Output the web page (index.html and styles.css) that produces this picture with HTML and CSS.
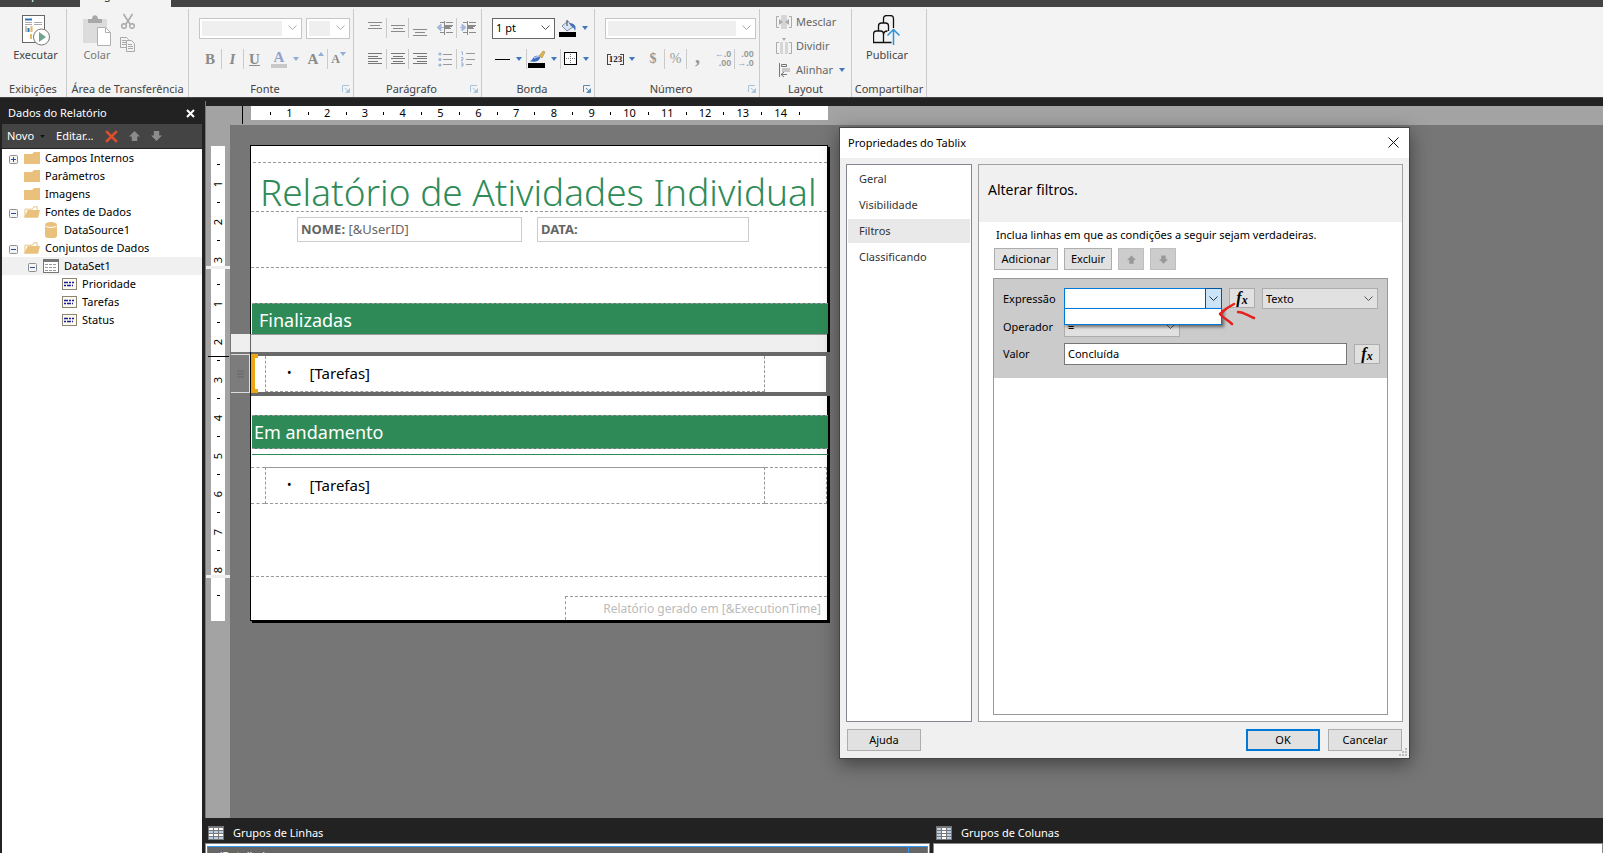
FILE: index.html
```html
<!DOCTYPE html>
<html lang="pt-BR">
<head>
<meta charset="utf-8">
<title>Report Builder</title>
<link rel="stylesheet" href="styles.css">
</head>
<body>
<svg class="defs" aria-hidden="true">
  <symbol id="caret" viewBox="0 0 6 4"><path d="M0 0h6L3 4z" fill="#3f78bd"/></symbol>
  <symbol id="launcher" viewBox="0 0 8 8"><path d="M.5 7V.5H7M3 3l4 4M7.500 3.500v4h-4" fill="none" stroke="currentColor"/><path d="M7 4v3H4z" fill="currentColor"/></symbol>
  <symbol id="folder" viewBox="0 0 16 14"><path d="M0 3h8l2-2h6v12H0z" fill="#e9c07c"/></symbol>
  <symbol id="folder-open" viewBox="0 0 17 14"><path d="M1 12V4h8l1.500-2.500H14V5" fill="#fff" stroke="#e9c07c"/><path d="M0 13L4 5h13l-2 8z" fill="#e9c07c"/></symbol>
  <symbol id="minus" viewBox="0 0 9 9"><rect x=".5" y=".5" width="8" height="8" rx="1" fill="#f4f4f4" stroke="#8e8f8f"/><path d="M2 4.500h5" stroke="#2b4b9b"/></symbol>
  <symbol id="plus" viewBox="0 0 9 9"><rect x=".5" y=".5" width="8" height="8" rx="1" fill="#f4f4f4" stroke="#8e8f8f"/><path d="M2 4.500h5M4.500 2v5" stroke="#2b4b9b"/></symbol>
  <symbol id="field" viewBox="0 0 15 12"><rect x=".5" y=".5" width="14" height="11" fill="#fdfbf0" stroke="#8a8470"/><path d="M2 4.500h4M7 4.500h2M10 4.500h2M2 7.500h2M5 7.500h4M10 7.500h1" stroke="#1b1b9c" stroke-width="1.500"/></symbol>
  <symbol id="arrow-up" viewBox="0 0 12 11"><path d="M6 0l6 6H9v5H3V6H0z" fill="currentColor"/></symbol>
  <symbol id="arrow-down" viewBox="0 0 12 11"><path d="M6 11L0 5h3V0h6v5h3z" fill="currentColor"/></symbol>
</svg>

<div class="app">
  <nav class="tabs"><a class="tab" href="#">Arquivo</a><a class="tab tab-on" href="#">Página Inicial</a></nav>

  <header class="ribbon">
    <section class="group g-run">
      <div class="body center"><button class="big"><svg width="28" height="32" viewBox="0 0 28 32"><rect x=".5" y=".5" width="22" height="27" fill="#fff" stroke="#666"/><path d="M3 4.500h7" stroke="#2e75b6" stroke-width="2"/><path d="M3 7.500h7M3 9.500h7M12 7.500h8M12 9.500h8" stroke="#aaa"/><path d="M4 11v6" stroke="#888"/><path d="M6.500 13v4" stroke="#2e75b6" stroke-width="2"/><path d="M9.500 11v6M9 19v5" stroke="#e8b765" stroke-width="2"/><circle cx="19.500" cy="22" r="8" fill="#fff" stroke="#777"/><path d="M17 17v10l7-5z" fill="#6fa58d"/></svg><span>Executar</span></button></div>
      <footer><span>Exibições</span></footer>
    </section>
    <section class="group g-clip">
      <div class="body clip"><button class="big dim"><svg width="28" height="32" viewBox="0 0 28 32"><path d="M0 4h24v24H0z" fill="#dcdcdc"/><path d="M5 8V4h4c0-5 6-5 6 0h4v4z" fill="#a8a8a8"/><path d="M14.500 12.500h8l5 5v13h-13z" fill="#fff" stroke="#b0b0b0"/><path d="M22.500 12.500v5h5" fill="none" stroke="#b0b0b0"/></svg><span>Colar</span></button>
        <div class="stack"><button aria-label="Recortar"><svg width="16" height="16" viewBox="0 0 16 16" fill="none" stroke="#a9a9a9" stroke-width="1.500"><path d="M3.500 1l6.500 10M12.500 1L6 11"/><circle cx="4" cy="13" r="2.300"/><circle cx="12" cy="13" r="2.300"/></svg></button><button aria-label="Copiar"><svg width="16" height="15" viewBox="0 0 16 15" fill="#f3f3f3" stroke="#a9a9a9"><path d="M.5.5h6l2 2v8h-8z"/><path d="M6.500 3.500h5l3 3v8h-8z"/><path d="M2 3.500h4M2 5.500h4M2 7.500h4M8 7.500h4M8 9.500h5M8 11.500h5"/></svg></button></div></div>
      <footer><span>Área de Transferência</span></footer>
    </section>
    <section class="group g-font">
      <div class="body">
        <div class="row gap"><select class="combo empty grow" disabled aria-label="Fonte"></select><select class="combo empty size" disabled aria-label="Tamanho"></select></div>
        <div class="row letters"><button class="b"><b>B</b></button><button class="b sep"><i>I</i></button><button class="b sep"><u>U</u></button><button class="b color"><span>A</span><svg width="6" height="4" viewBox="0 0 6 4"><path d="M0 0h6L3 4z" fill="#8faed6"/></svg></button><button class="b up">A<svg width="6" height="4" viewBox="0 0 6 4"><path d="M0 4h6L3 0z" fill="#8faed6"/></svg></button><button class="b sep down">A<svg width="6" height="4" viewBox="0 0 6 4"><path d="M0 0h6L3 4z" fill="#8faed6"/></svg></button></div>
      </div>
      <footer><span>Fonte</span><svg class="launch" width="8" height="8"><use href="#launcher"/></svg></footer>
    </section>
    <section class="group g-par">
      <div class="body">
        <div class="row lines">
          <button class="b"><svg width="16" height="16" viewBox="0 0 16 16"><path d="M1 2.500h14M3 5.500h10M1 8.500h14M4 11" stroke="#8a8a8a"/></svg></button>
          <button class="b sep"><svg width="16" height="16" viewBox="0 0 16 16"><path d="M1 5.500h14M3 8.500h10M1 11.500h14" stroke="#8a8a8a"/></svg></button>
          <button class="b sep"><svg width="16" height="16" viewBox="0 0 16 16"><path d="M1 9.500h14M3 12.500h10M1 15.500h14" stroke="#8a8a8a"/></svg></button>
          <button class="b gapl"><svg width="16" height="16" viewBox="0 0 16 16"><path d="M3 2.500h4M9 2.500h7M8 5.500h8M8 8.500h6M3 12.500h4M9 12.500h7M7.500 1v14" stroke="#8a8a8a"/><path d="M8 6h7M8 8h5" stroke="#8a8a8a" stroke-width="2"/><path d="M0 7.500L4 4v7zM3 7.500h4" fill="#a5b8dc" stroke="#a5b8dc"/></svg></button>
          <button class="b sep"><svg width="16" height="16" viewBox="0 0 16 16"><path d="M3 2.500h4M9 2.500h7M8 5.500h8M8 8.500h6M3 12.500h4M9 12.500h7M7.500 1v14" stroke="#8a8a8a"/><path d="M8 6h7M8 8h5" stroke="#8a8a8a" stroke-width="2"/><path d="M6 7.500L2 4v7zM0 7.500h3" fill="#a5b8dc" stroke="#a5b8dc"/></svg></button>
        </div>
        <div class="row lines">
          <button class="b"><svg width="16" height="16" viewBox="0 0 16 16"><path d="M1 2.500h14M1 5.500h10M1 7.500h14M1 10.500h10M1 12.500h14" stroke="#777"/></svg></button>
          <button class="b sep"><svg width="16" height="16" viewBox="0 0 16 16"><path d="M1 2.500h14M3 5.500h10M1 7.500h14M3 10.500h10M1 12.500h14" stroke="#777"/></svg></button>
          <button class="b sep"><svg width="16" height="16" viewBox="0 0 16 16"><path d="M1 2.500h14M5 5.500h10M1 7.500h14M5 10.500h10M1 12.500h14" stroke="#777"/></svg></button>
          <button class="b gapl"><svg width="16" height="16" viewBox="0 0 16 16"><path d="M6 3.500h9M6 8.500h9M6 13.500h9" stroke="#999"/><g fill="#9fb3da"><circle cx="3" cy="3" r="1.600"/><circle cx="3" cy="8.500" r="1.600"/><circle cx="3" cy="14" r="1.600"/></g></svg></button>
          <button class="b sep"><svg width="16" height="16" viewBox="0 0 16 16"><path d="M6 2.500h9M6 8.500h9M6 13.500h6" stroke="#999"/><path d="M1 1h1.500v3M1 6.500h2v2H1.500v1.500H3M1 12h2v3H1M3 13.500H1.500" fill="none" stroke="#9fb3da"/></svg></button>
        </div>
      </div>
      <footer><span>Parágrafo</span><svg class="launch" width="8" height="8"><use href="#launcher"/></svg></footer>
    </section>
    <section class="group g-border">
      <div class="body">
        <div class="row gap"><select class="combo pt" aria-label="Espessura"><option>1 pt</option></select><button class="b wide"><svg width="18" height="18" viewBox="0 0 18 18"><path d="M3 7l6-5 5 6-6 4z" fill="#dbe4f1" stroke="#7b8da8"/><path d="M8 1v6" stroke="#444"/><path d="M10 4c5 0 8 3 6 8-1-3-2-4-4-5z" fill="#3f6fb8"/><path d="M0 13h17v5H0z"/></svg><svg width="6" height="4"><use href="#caret"/></svg></button></div>
        <div class="row">
          <button class="b w34"><svg width="16" height="16" viewBox="0 0 16 16"><path d="M0 8.500h15" stroke="#000"/></svg><svg width="6" height="4"><use href="#caret"/></svg></button>
          <button class="b w34 sep"><svg width="18" height="18" viewBox="0 0 18 18"><path d="M11 6l4-5 2 1-3 6z" fill="#e3b64a" stroke="#8a7a45" stroke-width=".5"/><path d="M1 11c3 0 3-2 5-4 2-2 4-1 6 0 0 4-5 6-11 4z" fill="#3d6cc0"/><path d="M6 8l5-2" stroke="#a9c0ea" stroke-width="1.500"/><path d="M0 13h17v5H0z"/></svg><svg width="6" height="4"><use href="#caret"/></svg></button>
          <button class="b w34 sep"><svg width="14" height="14" viewBox="0 0 14 14"><rect x=".5" y=".5" width="12" height="12" fill="#fff" stroke="#000"/><path d="M6.500 2v10M2 6.500h10" stroke="#777" stroke-dasharray="1 1"/></svg><svg width="6" height="4"><use href="#caret"/></svg></button>
        </div>
      </div>
      <footer><span>Borda</span><svg class="launch on" width="8" height="8"><use href="#launcher"/></svg></footer>
    </section>
    <section class="group g-num">
      <div class="body">
        <div class="row gap"><select class="combo empty grow" disabled aria-label="Formato de número"></select></div>
        <div class="row nums"><button class="b w34 n123"><span>123</span><svg width="6" height="4"><use href="#caret"/></svg></button><button class="b gapn">$</button><button class="b sep pct">%</button><button class="b sep comma">,</button><button class="b dec gapl"><span><em>←</em>.0<br>.00</span></button><button class="b dec sep"><span>.00<br><em>→</em>.0</span></button></div>
      </div>
      <footer><span>Número</span><svg class="launch" width="8" height="8"><use href="#launcher"/></svg></footer>
    </section>
    <section class="group g-lay">
      <div class="body layout">
        <button><svg width="16" height="16" viewBox="0 0 16 16"><path d="M5 1h6v14H5z" fill="#d6d6d6"/><path d="M3 2.500H.5v11H3M13 2.500h2.500v11H13" fill="none" stroke="#aaa"/><path d="M3 5l4 3-4 3zM13 5L9 8l4 3z" fill="#aaa"/></svg>Mesclar</button>
        <button><svg width="16" height="16" viewBox="0 0 16 16"><path d="M6 0h4L8 3z" fill="#aaa"/><path d="M4 4h3v12H4zM9 4h3v12H9z" fill="#d6d6d6"/><path d="M3 4.500H.5v11H3M13 4.500h2.500v11H13" fill="none" stroke="#aaa"/></svg>Dividir</button>
        <button><svg width="16" height="16" viewBox="0 0 16 16"><path d="M3.500 1v14" stroke="#777"/><path d="M5.500 2.500h5v2h-5z" fill="none" stroke="#777"/><path d="M6 6h8v4H6z" fill="#c9c9c9"/><path d="M5 12.500h6M8 10l-3 2.500L8 15" fill="none" stroke="#777"/></svg>Alinhar<svg class="al" width="6" height="4"><use href="#caret"/></svg></button>
      </div>
      <footer><span>Layout</span></footer>
    </section>
    <section class="group g-share">
      <div class="body center"><button class="big"><svg width="28" height="32" viewBox="0 0 28 32" fill="none" stroke="#111" stroke-width="1.300"><path d="M10.500 8V4c0-2 1-3.500 3-3.500h4c2 0 3 1 3 3V13"/><path d="M5.500 16v-5c0-2 1-3 3-3h4c2 0 3 1 3 3v5"/><path d="M.5 27.500V19c0-2 1-3 3-3h4c2 0 3 1 3 3v8.500zM10.500 27.500h8M10.500 20c0-2 1-4 4-4"/><path d="M20.500 30V15M14.500 20.500l6-6 6 6" stroke="#2a93dc" stroke-width="1.500"/></svg><span>Publicar</span></button></div>
      <footer><span>Compartilhar</span></footer>
    </section>
  </header>

  <div class="main">
    <aside class="data">
      <div class="data-title"><span>Dados do Relatório</span><button aria-label="Fechar"><svg width="9" height="9" viewBox="0 0 9 9"><path d="M1 1l7 7M8 1L1 8" stroke="#fff" stroke-width="2"/></svg></button></div>
      <div class="data-bar"><button>Novo<svg width="5" height="3" viewBox="0 0 6 4"><path d="M0 0h6L3 4z" fill="#111"/></svg></button><button>Editar...</button><button aria-label="Excluir"><svg width="13" height="13" viewBox="0 0 12 12"><path d="M1 1l10 10M11 1L1 11" stroke="#df4f2b" stroke-width="2.400"/></svg></button><button class="ar" aria-label="Acima"><svg width="11" height="10" viewBox="0 0 12 11"><use href="#arrow-up"/></svg></button><button class="ar" aria-label="Abaixo"><svg width="11" height="10" viewBox="0 0 12 11"><use href="#arrow-down"/></svg></button></div>
      <ul class="tree">
        <li><svg class="tg" width="9" height="9"><use href="#plus"/></svg><svg class="ic" width="16" height="14"><use href="#folder"/></svg>Campos Internos</li>
        <li><i class="tg"></i><svg class="ic" width="16" height="14"><use href="#folder"/></svg>Parâmetros</li>
        <li><i class="tg"></i><svg class="ic" width="16" height="14"><use href="#folder"/></svg>Imagens</li>
        <li><svg class="tg" width="9" height="9"><use href="#minus"/></svg><svg class="ic" width="16" height="14"><use href="#folder-open"/></svg>Fontes de Dados</li>
        <li class="l2"><i class="tg"></i><svg class="ic" width="16" height="16" viewBox="0 0 16 16"><path d="M2 3c0-4 12-4 12 0v11c0 3-12 3-12 0z" fill="#e9c07c"/><path d="M2 3.500c1 2.500 11 2.500 12 0" fill="none" stroke="#fff"/></svg>DataSource1</li>
        <li><svg class="tg" width="9" height="9"><use href="#minus"/></svg><svg class="ic" width="16" height="14"><use href="#folder-open"/></svg>Conjuntos de Dados</li>
        <li class="l2 on"><svg class="tg" width="9" height="9"><use href="#minus"/></svg><svg class="ic" width="16" height="14" viewBox="0 0 16 14"><rect x=".5" y=".5" width="15" height="13" fill="#fff" stroke="#777"/><path d="M0 1.500h16" stroke="#777" stroke-width="3"/><path d="M2 5.500h12M2 8.500h12M2 11.500h12" stroke="#999" stroke-dasharray="3 1"/></svg>DataSet1</li>
        <li class="l3"><i class="tg"></i><svg class="ic" width="15" height="12"><use href="#field"/></svg>Prioridade</li>
        <li class="l3"><i class="tg"></i><svg class="ic" width="15" height="12"><use href="#field"/></svg>Tarefas</li>
        <li class="l3"><i class="tg"></i><svg class="ic" width="15" height="12"><use href="#field"/></svg>Status</li>
      </ul>
    </aside>

    <div class="work">
      <div class="design">
        <div class="hrule"><div class="hscale"><i></i><b>1</b><i></i><b>2</b><i></i><b>3</b><i></i><b>4</b><i></i><b>5</b><i></i><b>6</b><i></i><b>7</b><i></i><b>8</b><i></i><b>9</b><i></i><b>10</b><i></i><b>11</b><i></i><b>12</b><i></i><b>13</b><i></i><b>14</b><i></i></div></div>
        <div class="lower">
          <div class="vrule">
            <div class="vseg s1"><div><i></i><b>1</b><i></i><b>2</b><i></i><b>3</b></div></div>
            <div class="vseg s2"><div><i></i><b>1</b><i></i><b>2</b><i></i><b>3</b><i></i><b>4</b><i></i><b>5</b><i></i><b>6</b><i></i><b>7</b><i></i><b>8</b></div><span class="mark"></span></div>
            <div class="vseg s3"><div><i></i></div></div>
          </div>
          <div class="canvas">
            <article class="page">
              <h1>Relatório de Atividades Individual</h1>
              <div class="meta"><p class="nome"><b>NOME:</b> [&amp;UserID]</p><p class="date"><b>DATA:</b></p></div>
              <div class="rbody">
                <h2 class="bar first">Finalizadas</h2>
                <div class="tablix-sel">
                  <span class="corner"></span><span class="handle"><svg width="7" height="8" viewBox="0 0 7 8"><path d="M0 1h7M0 4h7M0 7h7" stroke="#666"/></svg></span>
                  <div class="colgrip"></div>
                  <div class="selrow"><span class="bracket"></span><div class="cell"><span class="dot">•</span>[Tarefas]</div></div>
                </div>
                <h2 class="bar second">Em andamento</h2>
                <hr>
                <div class="tablix"><div class="pad"></div><div class="cell"><span class="dot">•</span>[Tarefas]</div><div class="rest"></div></div>
              </div>
              <div class="pfoot"><p>Relatório gerado em [&amp;ExecutionTime]</p></div>
            </article>
          </div>
        </div>
      </div>
      <div class="groups">
        <section class="rows"><h3><svg width="16" height="14" viewBox="0 0 16 14"><path d="M0 0h16v14H0z" fill="#777"/><path d="M1 2h4v2H1zM6 2h4v2H6zM11 2h4v2h-4zM1 8h4v2H1zM6 8h4v2H6zM11 8h4v2h-4z" fill="#fff"/><path d="M1 5h4v2H1zM6 5h4v2H6zM11 5h4v2h-4zM1 11h4v2H1zM6 11h4v2H6zM11 11h4v2h-4z" fill="#b9d0e6"/></svg>Grupos de Linhas</h3><div class="gbox"><div class="gitem"><span>(Detalhe)</span></div></div></section>
        <section class="cols"><h3><svg width="16" height="14" viewBox="0 0 16 14"><path d="M0 0h16v14H0z" fill="#777"/><path d="M1 2h4v2H1zM11 2h4v2h-4zM1 5h4v2H1zM11 5h4v2h-4zM1 8h4v2H1zM11 8h4v2h-4zM1 11h4v2H1zM11 11h4v2h-4z" fill="#b9d0e6"/><path d="M6 2h4v2H6zM6 5h4v2H6zM6 8h4v2H6zM6 11h4v2H6z" fill="#fff"/></svg>Grupos de Colunas</h3><div class="gbox"></div></section>
      </div>
    </div>
  </div>
</div>

<div class="dialog" role="dialog" aria-label="Propriedades do Tablix">
  <div class="dlg-title"><span>Propriedades do Tablix</span><button aria-label="Fechar"><svg width="11" height="11" viewBox="0 0 11 11"><path d="M.5.5l10 10M10.500.5l-10 10" stroke="#111"/></svg></button></div>
  <div class="dlg-body">
    <ul class="cats"><li>Geral</li><li>Visibilidade</li><li class="on">Filtros</li><li>Classificando</li></ul>
    <div class="pane">
      <h2>Alterar filtros.</h2>
      <p>Inclua linhas em que as condições a seguir sejam verdadeiras.</p>
      <div class="tools"><button class="btn add">Adicionar</button><button class="btn del">Excluir</button><button class="btn ico" disabled aria-label="Acima"><svg width="9" height="9"><use href="#arrow-up"/></svg></button><button class="btn ico" disabled aria-label="Abaixo"><svg width="9" height="9"><use href="#arrow-down"/></svg></button></div>
      <div class="filters">
        <form class="filter">
          <label for="expr">Expressão</label>
          <div class="exprrow"><div class="open"><input id="expr" type="text"><button type="button" aria-label="Abrir"><svg width="9" height="6" viewBox="0 0 9 6"><path d="M.5.5l4 4 4-4" fill="none" stroke="#333"/></svg></button><div class="drop"></div></div><button type="button" class="btn fx">f<sub>x</sub></button><select class="combo flat tx" aria-label="Tipo"><option>Texto</option></select>
          <svg class="ink" width="38" height="24" viewBox="0 0 38 24" fill="none" stroke="#e5201d" stroke-width="2.500" stroke-linecap="round" stroke-linejoin="round"><path d="M16 2C10 5 5 9 2 12c3 4 8 6 12 10M20 10c6 0 10 4 16 6"/></svg></div>
          <label for="op">Operador</label>
          <div><select id="op" class="combo flat op"><option>=</option></select></div>
          <label for="val">Valor</label>
          <div class="valrow"><input id="val" type="text" value="Concluída"><button type="button" class="btn fx">f<sub>x</sub></button></div>
        </form>
      </div>
    </div>
  </div>
  <div class="dlg-foot"><button class="btn">Ajuda</button><span class="space"></span><button class="btn ok">OK</button><button class="btn">Cancelar</button>
  <svg class="grip" width="9" height="9" viewBox="0 0 9 9" fill="#bbb"><path d="M6 0h2v2H6zM6 3h2v2H6zM3 3h2v2H3zM6 6h2v2H6zM3 6h2v2H3zM0 6h2v2H0z"/></svg></div>
</div>
</body>
</html>
```
FILE: styles.css
```css
* { box-sizing: border-box; }
body { margin: 0; font: 11px/16px "Noto Sans", "Open Sans", sans-serif; color: #000; overflow: hidden; }
button, input, select { font: inherit; color: inherit; }
button { border: 0; padding: 0; background: none; }
h1, h2, h3, p, ul { margin: 0; padding: 0; font-weight: normal; list-style: none; }
svg { display: block; flex: none; }
.defs { position: absolute; width: 0; height: 0; }
.app { height: 100vh; display: flex; flex-direction: column; background: #222; }

/* tab strip and ribbon */
.tabs { height: 7px; background: #444; display: flex; align-items: flex-end; overflow: hidden; flex: none; }
.tab { width: 80px; text-align: center; line-height: 16px; padding-bottom: 4px; color: #fff; text-decoration: none; flex: none; padding-right: 8px; }
.tab-on { width: 91px; padding-right: 0; background: #f3f3f3; color: #333; }
.ribbon { background: #f3f3f3; height: 91px; border-bottom: 1px solid #444; display: flex; flex: none; padding: 2px 0 0; color: #444; }
.group { border-right: 1px solid #cacaca; display: flex; flex-direction: column; flex: none; }
.g-run { width: 67px; } .g-clip { width: 122px; } .g-font { width: 165px; } .g-par { width: 128px; }
.g-border { width: 113px; } .g-num { width: 165px; } .g-lay { width: 92px; } .g-share { width: 75px; }
.group .body { flex: 1; padding: 8px 3px 0 10px; display: flex; flex-direction: column; gap: 9px; }
.group footer { height: 16px; text-align: center; position: relative; white-space: nowrap; }
.g-font footer, .g-par footer, .g-border footer, .g-num footer { padding-right: 12px; }
.launch { position: absolute; right: 3px; bottom: 4px; color: #a6c3da; }
.launch.on { color: #5a8ab4; }
.group .center { align-items: center; padding: 6px 0 0; }
.g-run .center { padding-left: 5px; }
.g-share .center { padding-right: 4px; }
.big { display: flex; flex-direction: column; align-items: center; }
.dim { color: #777; }
.group .clip { flex-direction: row; padding: 6px 0 0 16px; gap: 9px; }
.clip .big { align-self: flex-start; }
.stack { display: flex; flex-direction: column; gap: 8px; margin-top: -2px; }
.row { display: flex; align-items: center; height: 22px; }
.gap { gap: 4px; }
.b { width: 22px; height: 20px; display: flex; align-items: center; justify-content: center; flex: none; }
.sep { border-left: 1px solid #cacaca; }
.combo { appearance: none; height: 21px; border: 1px solid #c6c6c6; border-radius: 0; padding: 0 18px 0 3px; background: url("data:image/svg+xml,%3Csvg xmlns='http://www.w3.org/2000/svg' width='9' height='6'%3E%3Cpath d='M.5.5l4 4 4-4' fill='none' stroke='%23555'/%3E%3C/svg%3E") no-repeat right 4px center #fff; }
.empty { opacity: 1; background-image: url("data:image/svg+xml,%3Csvg xmlns='http://www.w3.org/2000/svg' width='9' height='6'%3E%3Cpath d='M.5.5l4 4 4-4' fill='none' stroke='%23aaa'/%3E%3C/svg%3E"), linear-gradient(#efefef, #efefef); background-size: 9px 6px, calc(100% - 21px) 15px; background-position: right 4px center, 2px center; background-repeat: no-repeat; }
.grow { flex: 1; min-width: 0; }
.size { width: 44px; }
.pt { width: 64px; border-color: #666; color: #000; }
.wide { width: 32px; gap: 5px; padding-right: 3px; }
.w34 { width: 34px; gap: 5px; padding-right: 2px; }
.letters { font: bold 15px "Liberation Serif", serif; color: #8a8a8a; }
.letters .color { width: 40px; gap: 6px; color: #8fa3cc; }
.color span { border-bottom: 4px solid #c9c9c9; padding: 0 3px; line-height: 13px; }
.up svg, .down svg { align-self: flex-start; margin-top: 3px; }
.down { font-size: 12px; }
.gapl { margin-left: 4px; }
.nums { font: bold 14px "Liberation Serif", serif; color: #999; }
.pct { font-weight: normal; }
.comma { font-size: 20px; line-height: 10px; padding-bottom: 7px; }
.n123 span { font-size: 9px; line-height: 11px; color: #222; padding: 0 1px; background: linear-gradient(#444, #444) 0 0 / 3px 1px, linear-gradient(#444, #444) 100% 0 / 3px 1px, linear-gradient(#444, #444) 0 100% / 3px 1px, linear-gradient(#444, #444) 100% 100% / 3px 1px; background-repeat: no-repeat; border: solid #444; border-width: 0 1px; }
.gapn { margin-left: 3px; }
.dec span { font: bold 9px/9px "Liberation Sans", sans-serif; text-align: right; }
.dec em { font-style: normal; color: #8aa8dd; }
.group .layout { gap: 8px; padding: 5px 0 0 16px; }
.layout button { display: flex; align-items: center; gap: 4px; height: 16px; color: #666; }
.al { margin-left: 2px; }

/* report data panel */
.main { flex: 1; display: flex; min-height: 0; }
.data { width: 205px; padding: 0 3px 0 2px; display: flex; flex-direction: column; flex: none; }
.data-title { height: 26px; color: #fff; display: flex; align-items: center; justify-content: space-between; padding: 4px 7px 0 6px; }
.data-bar { height: 25px; background: #444; color: #fff; display: flex; align-items: center; padding-left: 5px; gap: 11px; border-bottom: 1px solid #222; }
.data-bar button { display: flex; align-items: center; gap: 6px; }
.data-bar .ar { color: #8c8c8c; }
.tree { background: #fff; flex: 1; }
.tree li { height: 18px; display: flex; align-items: center; padding-left: 7px; }
.tree .tg { width: 9px; margin: 2px 6px 0 0; flex: none; }
.tree .ic { margin-right: 5px; }
.tree .l2 { padding-left: 26px; }
.tree .l3 { padding-left: 45px; }
.tree .on { background: #f0f0f0; }

/* design surface */
.work { flex: 1; display: flex; flex-direction: column; min-width: 0; padding-top: 3px; }
.design { flex: 1; display: flex; flex-direction: column; border-left: 1px solid #777; min-height: 0; background: #a3a3a3; }
.hrule { height: 24px; border-top: 5px solid #222; padding-left: 45px; flex: none; background: linear-gradient(#000, #000) no-repeat 36px 0 / 1px 18px; }
.hscale { width: 577px; height: 14px; background: #fff; display: grid; grid-auto-flow: column; grid-auto-columns: 1fr; padding: 0 19px 0 10px; justify-items: center; align-items: center; line-height: 14px; }
.hscale b, .vseg b { font-weight: normal; }
.hscale i { width: 1px; height: 3px; background: #000; }
.lower { flex: 1; display: flex; min-height: 0; }
.vrule { width: 24px; padding-top: 21px; flex: none; }
.vseg { position: relative; padding: 0 5px; border-bottom: 3px solid #efefef; }
.vseg div { background: #fff; display: grid; grid-auto-rows: 19px; place-items: center; }
.vseg b { transform: rotate(-90deg); line-height: 14px; }
.vseg i { width: 3px; height: 1px; background: #000; }
.s1 div { height: 120px; padding-top: 9px; }
.s2 div { height: 306px; padding-top: 6px; }
.s3 div { height: 43px; padding-top: 8px; }
.s3 { border: 0; }
.mark { position: absolute; left: 2px; top: 87px; width: 21px; height: 1px; background: #000; }
.canvas { flex: 1; background: #767676; padding: 20px 0 0 20px; }
.page { width: 578px; background: #fff; border: 1px solid #000; box-shadow: 2px 2px 0 #000; padding-top: 16px; }
.page h1 { height: 49px; border-top: 1px dashed #999; color: #2e8b57; font-size: 37px; font-weight: 300; line-height: 58px; padding-left: 7px; white-space: nowrap; margin-left: 2px; }
.meta { height: 56px; border-top: 1px dashed #999; display: flex; gap: 15px; padding: 5px 0 0 46px; color: #666; font-size: 13px; line-height: 22px; }
.meta p { height: 25px; border: 1px solid #ccc; padding-left: 3px; }
.nome { width: 225px; } .date { width: 212px; }
.rbody { border-top: 1px dashed #999; padding-top: 35px; height: 309px; }
.bar { background: #2e8b57; color: #fff; font-size: 18px; margin: 0 -1px 0 1px; border-top: 1px dashed #999; }
.page .first { height: 31px; line-height: 32px; padding-left: 7px; }
.tablix-sel { position: relative; }
.colgrip { height: 18px; background: #efefef; border-top: 1px solid #999; }
.corner { position: absolute; left: -20px; top: 0; width: 20px; height: 18px; background: #efefef; border-right: 1px solid #666; }
.handle { position: absolute; left: -20px; top: 20px; width: 19px; height: 39px; background: #7c7c7c; border: 1px solid #ddd; border-left: 0; display: flex; align-items: center; justify-content: center; }
.selrow { position: relative; height: 44px; border: solid #696969; border-width: 4px 4px 4px 0; margin-right: -3px; padding: 0 61px 0 14px; }
.selrow .cell { border: 1px dashed #999; border-top: 0; height: 36px; }
.bracket { position: absolute; left: 0; top: -2px; width: 7px; height: 39px; border: 4px solid #eba515; border-right: 0; }
.cell { display: flex; align-items: center; gap: 18px; padding: 0 0 2px 21px; font-size: 15px; }
.dot { font-size: 12px; }
.page .second { height: 34px; margin-top: 19px; line-height: 32px; padding-left: 2px; border-bottom: 1px dashed #999; }
.page hr { margin: 5px -1px 12px 1px; border: 0; height: 1px; background: #2e8b57; }
.tablix { display: grid; grid-template-columns: 14px 1fr 62px; height: 37px; }
.tablix > div { border: 1px dashed #999; border-left: 0; }
.tablix .pad { border-right: 0; }
.tablix > .cell { border-top-style: solid; border-left: 1px dashed #999; }
.pfoot { border-top: 1px dashed #999; padding-top: 19px; display: flex; justify-content: flex-end; }
.pfoot p { width: 262px; height: 24px; border: 1px dashed #999; border-width: 1px 0 0 1px; text-align: right; padding-right: 6px; font-size: 12px; line-height: 23px; color: #bbb; }

/* grouping pane */
.groups { height: 35px; display: flex; gap: 3px; flex: none; overflow: hidden; color: #fff; }
.rows { width: 725px; } .cols { flex: 1; }
.groups h3 { height: 25px; font-size: 11px; display: flex; align-items: center; gap: 9px; padding: 4px 0 0 3px; }
.gbox { border: 1px solid #888; background: #fff; height: 40px; padding: 2px 1px; }
.gitem { border: 1px solid #3294f0; background: #666; height: 26px; padding-left: 11px; display: flex; }
.gitem span { flex: 1; border-right: 1px solid #3294f0; margin-right: 18px; line-height: 18px; }

/* properties dialog */
.dialog { position: absolute; left: 839px; top: 127px; width: 571px; height: 632px; border: 1px solid #444; background: #f0f0f0; box-shadow: 0 5px 18px rgba(0, 0, 0, .45); display: flex; flex-direction: column; }
.dlg-title { height: 30px; background: #fff; display: flex; justify-content: space-between; align-items: center; padding: 0 10px 1px 8px; }
.dlg-body { flex: 1; display: flex; gap: 6px; padding: 6px 6px 0; min-height: 0; }
.cats { width: 126px; border: 1px solid #828790; background: #fff; padding: 2px 1px; color: #333; flex: none; }
.cats li { height: 24px; line-height: 24px; margin-bottom: 2px; padding-left: 11px; }
.cats .on { background: #e9e9e9; }
.pane { flex: 1; min-width: 0; border: 1px solid #a0a0a0; background: #fff; display: flex; flex-direction: column; padding-bottom: 6px; }
.pane h2 { height: 57px; background: #f0f0f0; font-size: 14px; line-height: 50px; padding-left: 9px; }
.pane p { padding: 5px 0 5px 17px; white-space: nowrap; }
.tools { display: flex; gap: 6px; padding-left: 15px; }
.btn { border: 1px solid #adadad; background: #e1e1e1; height: 22px; display: flex; align-items: center; justify-content: center; color: #000; flex: none; }
.add { width: 64px; } .del { width: 48px; }
.ico { width: 26px; background: #ccc; border-color: #bfbfbf; color: #999; }
.filters { flex: 1; border: 1px solid #999; margin: 8px 14px 0; }
.filter { background: #cbcbcb; height: 99px; padding: 9px 0 0 9px; display: grid; grid-template-columns: 61px 1fr; grid-template-rows: 21px 35px 20px; align-items: center; }
.exprrow { display: flex; position: relative; gap: 7px; }
.open { position: relative; display: flex; width: 158px; height: 21px; border: 1px solid #0078d7; background: #fff; }
.open input { flex: 1; min-width: 0; border: 0; background: none; padding: 0 3px; }
.open button { width: 17px; margin: -1px; background: #cce4f7; border: 1px solid #005499; display: flex; align-items: center; justify-content: center; height: 21px; }
.drop { position: absolute; z-index: 1; left: -1px; right: -1px; top: 19px; height: 17px; background: #fff; border: 1px solid #0078d7; box-shadow: 2px 2px 3px rgba(0, 0, 0, .5); }
.fx { width: 26px; height: 20px; font: italic bold 16px/16px "Liberation Serif", serif; }
.fx sub { font-size: 12px; line-height: 10px; vertical-align: baseline; align-self: center; padding-top: 4px; }
.flat { background-color: #e1e1e1; border-color: #adadad; }
.tx { width: 116px; }
.op { width: 116px; display: block; }
.ink { position: absolute; z-index: 2; left: 154px; top: 14px; }
.valrow { display: flex; gap: 7px; align-items: center; }
.valrow input { width: 283px; height: 22px; border: 1px solid #777; padding: 0 3px 2px; background: #fff; }
.dlg-foot { position: relative; display: flex; gap: 8px; padding: 7px 7px 7px; }
.dlg-foot .btn { width: 74px; }
.space { flex: 1; }
.dlg-foot .ok { border: 2px solid #0078d7; }
.grip { position: absolute; right: 1px; bottom: 1px; }
```
